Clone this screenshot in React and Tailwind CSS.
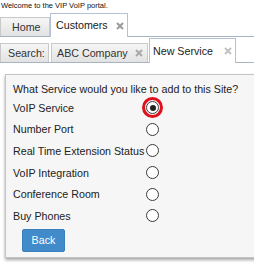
import React from "react";

const Close = ({ cls }) => (
  <svg width="8" height="8" viewBox="0 0 8 8" className={"shrink-0 " + cls}>
    <path d="M1 1L7 7M7 1L1 7" stroke="currentColor" strokeWidth="2" />
  </svg>
);

const Radio = ({ checked }) => (
  <div className="relative w-[13px] h-[13px] rounded-full border border-[#3a3a3a] bg-white flex items-center justify-center">
    {checked && <div className="w-[6px] h-[6px] rounded-full bg-[#222]" />}
    {checked && (
      <div className="absolute -inset-[5px] rounded-full border-[3px] border-[#e0101c]" />
    )}
  </div>
);

const items = [
  ["VoIP Service", true],
  ["Number Port", false],
  ["Real Time Extension Status", false],
  ["VoIP Integration", false],
  ["Conference Room", false],
  ["Buy Phones", false],
];

export default function App() {
  return (
    <div className="w-[254px] h-[267px] bg-white overflow-hidden text-[#222] font-['Liberation_Sans',Arial,sans-serif]">
      <div className="h-[11px] leading-[11px] text-[7.5px] pl-[1px] text-[#111]">
        Welcome to the VIP VoIP portal.
      </div>

      {/* Tab row 1 */}
      <div className="flex items-end h-[26px] border-b border-[#a9b4c2]">
        <div className="w-[50px] h-[19px] flex items-center pl-[11px] text-[10.7px] text-[#333] border border-b-0 border-[#c9c9c9] bg-linear-to-b from-[#f6f6f6] to-[#e2e2e2]">
          Home
        </div>
        <div className="relative w-[78px] h-[24px] mb-[-1px] flex items-center justify-between pl-[5px] pr-[3px] text-[10.7px] text-[#222] border border-b-0 border-[#b4c2d6] bg-white">
          <span>Customers</span>
          <Close cls="text-[#9a9a9a]" />
        </div>
      </div>

      {/* Tab row 2 */}
      <div className="flex items-end h-[26px] border-b border-[#a9b4c2]">
        <div className="w-[49px] h-[19px] flex items-center pl-[7px] text-[10.7px] text-[#333] border border-b-0 border-[#c9c9c9] bg-linear-to-b from-[#f6f6f6] to-[#e2e2e2]">
          Search:
        </div>
        <div className="ml-[2px] w-[97px] h-[19px] flex items-center justify-between pl-[5px] pr-[4px] text-[10.7px] text-[#333] border border-b-0 border-[#c9c9c9] bg-linear-to-b from-[#f6f6f6] to-[#e2e2e2]">
          <span>ABC Company</span>
          <Close cls="text-[#a8a8a8]" />
        </div>
        <div className="relative ml-[1px] w-[87px] h-[25px] mb-[-1px] flex items-center justify-between pl-[3px] pr-[3px] text-[10.7px] text-[#222] border border-b-0 border-[#b4c2d6] bg-white">
          <span>New Service</span>
          <Close cls="text-[#c2c2c2]" />
        </div>
      </div>

      {/* Panel */}
      <div className="mt-[11px] ml-[5px] w-[260px] border border-[#c4c4c4] bg-[#f6f6f6] shadow-[0_2px_3px_rgba(0,0,0,0.35)] pt-[6px] pl-[7px] pb-[5px]">
        <div className="h-[16px] leading-[16px] text-[10.7px] text-[#222]">
          What Service would you like to add to this Site?
        </div>
        {items.map(([label, checked]) => (
          <div key={label} className="flex items-center h-[21.6px] text-[10.7px] text-[#222]">
            <div className="w-[133px] whitespace-nowrap">{label}</div>
            <Radio checked={checked} />
          </div>
        ))}
        <div className="mt-[2.4px] ml-[9px] w-[43px] h-[23px] rounded-[2px] bg-[#428bca] border border-[#3a7fba] flex items-center justify-center text-[10.7px] text-white">
          Back
        </div>
      </div>
    </div>
  );
}
